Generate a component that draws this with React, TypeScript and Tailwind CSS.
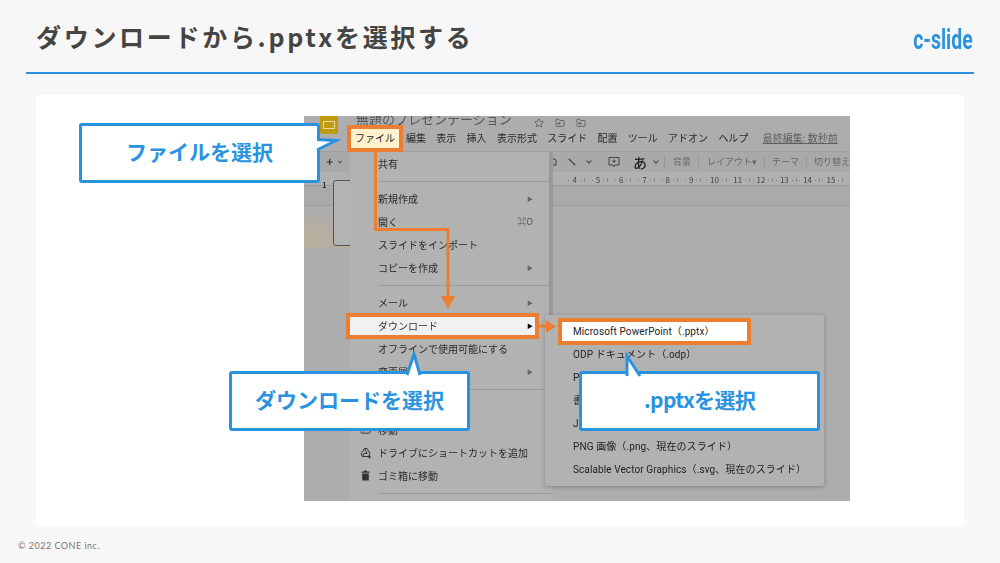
import { Plus, ChevronDown, Star, FolderInput, Minus } from 'lucide-react';

const jp = { fontFamily: '"Noto Sans CJK JP", sans-serif' };
const latinFirst = { fontFamily: 'Roboto, "Noto Sans CJK JP", sans-serif' };

const menuBar = ['編集', '表示', '挿入', '表示形式', 'スライド', '配置', 'ツール', 'アドオン', 'ヘルプ'];
const rulerNumbers = ['4', '5', '6', '7', '8', '9', '10', '11', '12', '13', '14', '15'];
const subItems = [
    'Microsoft PowerPoint（.pptx）',
    'ODP ドキュメント（.odp）',
    'PDF ドキュメント（.pdf）',
    '書式なしテキスト（.txt）',
    'JPEG 画像（.jpg、現在のスライド）',
    'PNG 画像（.png、現在のスライド）',
    'Scalable Vector Graphics（.svg、現在のスライド）',
];

function Divider() {
    return <div className="my-[5.5px] ml-[28px] h-px bg-[#9b9b9b]" />;
}

function MenuItem({ label, arrow, hint, icon, active }: { label: string; arrow?: boolean; hint?: string; icon?: React.ReactNode; active?: boolean }) {
    return (
        <div className={`flex h-[23px] items-center pl-[28px] text-[10px] ${active ? 'mr-[14px] bg-[#f1f1f3] pr-[6px] text-[#333]' : 'pr-[20px] text-[#2a2a2a]'}`}>
            {icon && <span className="-ml-[18px] flex w-[18px] items-center text-[#333]">{icon}</span>}
            <span className="flex-1 whitespace-nowrap">{label}</span>
            {arrow && <span className={`text-[6px] ${active ? 'text-black' : 'text-[#666]'}`}>▶</span>}
            {hint && <span className="text-[9px] text-[#555]">{hint}</span>}
        </div>
    );
}

function Callout({ className, label, children }: { className: string; label: string; children: React.ReactNode }) {
    return (
        <div className={`absolute z-30 flex h-[60px] w-[241px] items-center justify-center rounded-[3px] border-[3px] border-[#2a93e0] bg-white pb-[3px] text-[21px] font-bold text-[#2a93e0] ${className}`}>
            {label}
            {children}
        </div>
    );
}

export default function App() {
    return (
        <div className="flex h-[563px] w-[1000px] flex-col overflow-hidden bg-[#f7f7f7]" style={jp}>
            <header className="mx-[26px] flex h-[74px] shrink-0 items-start justify-between border-b-2 border-[#2a93e0] pr-px pl-[10px]">
                <h1 className="mt-[18px] text-[25px] leading-[36px] font-bold tracking-[2.7px] text-[#444]">ダウンロードから.pptxを選択する</h1>
                <div className="mt-[25px] origin-right scale-x-[0.72] font-['Roboto',sans-serif] text-[27px] leading-[30px] font-bold text-[#2a93e0]">c-slide</div>
            </header>

            <main className="mx-[36px] mt-[21px] h-[431px] shrink-0 bg-white pt-[21px] pl-[268px]">
                <div className="relative h-[385px] w-[546px] overflow-hidden bg-[#adadaf] blur-[0.3px]">
                    {/* app icon */}
                    <div className="absolute top-0 left-[16px] flex h-[18px] w-[18px] items-center justify-center rounded-b-[2px] bg-[#c19a0c]">
                        <div className="h-[8px] w-[12px] border border-[#e6d9a8]" />
                    </div>

                    {/* title row */}
                    <div className="flex h-[9px] items-end pl-[52px]">
                        <span className="-mb-[1px] text-[13px] leading-[14px] whitespace-nowrap text-[#555]">無題のプレゼンテーション</span>
                        <Star className="mb-[-3px] ml-[22px] h-[10px] w-[10px] text-[#555]" />
                        <FolderInput className="mb-[-3px] ml-[11px] h-[10px] w-[10px] text-[#555]" />
                        <FolderInput className="mb-[-3px] ml-[11px] h-[10px] w-[10px] text-[#555]" />
                    </div>

                    {/* menu row */}
                    <div className="flex h-[27px] items-center gap-[10.3px] border-b border-[#a0a0a2] pb-[2px] pl-[102px] text-[10px] whitespace-nowrap text-[#2a2a2a]">
                        {menuBar.map((m) => (
                            <span key={m}>{m}</span>
                        ))}
                        <span className="ml-[4px] text-[#5e5e5e] underline">最終編集: 数秒前</span>
                    </div>

                    {/* toolbar */}
                    <div className="flex h-[20px] items-center bg-[#a9a9ab] pl-[21px] text-[9px] whitespace-nowrap text-[#666]">
                        <Plus className="h-[12px] w-[12px] text-[#333]" strokeWidth={3} />
                        <ChevronDown className="ml-[3px] h-[8px] w-[8px] text-[#555]" strokeWidth={4} />
                        <svg className="ml-[205px] h-[12px] w-[12px] text-[#444]" viewBox="0 0 12 12" fill="none" stroke="currentColor" strokeWidth="1.3">
                            <path d="M2 2H7L9 4V10H5" />
                        </svg>
                        <div className="ml-[7px] flex items-center">
                            <Minus className="h-[14px] w-[14px] rotate-45 text-[#333]" />
                            <ChevronDown className="ml-[6px] h-[8px] w-[8px] text-[#555]" strokeWidth={4} />
                            <svg className="ml-[15px] h-[12px] w-[12px] text-[#444]" viewBox="0 0 12 12" fill="none" stroke="currentColor" strokeWidth="1">
                                <path d="M1 1.500H11V9H7L6 10.500L5 9H1ZM6 3.500V7M4.200 5.200H7.800" />
                            </svg>
                            <span className="ml-[13px] text-[14px] leading-none font-medium text-[#222]">あ</span>
                            <ChevronDown className="ml-[5px] h-[8px] w-[8px] text-[#555]" strokeWidth={4} />
                            <span className="ml-[4px] h-[14px] w-px bg-[#9a9a9c]" />
                            <span className="ml-[8px]">背景</span>
                            <span className="ml-[7px] h-[14px] w-px bg-[#9a9a9c]" />
                            <span className="ml-[8px]">レイアウト▾</span>
                            <span className="ml-[7px] h-[14px] w-px bg-[#9a9a9c]" />
                            <span className="ml-[7px]">テーマ</span>
                            <span className="ml-[7px] h-[14px] w-px bg-[#9a9a9c]" />
                            <span className="ml-[7px]">切り替え</span>
                        </div>
                    </div>

                    {/* ruler */}
                    <div className="relative h-[14px] border-b border-[#9c9c9e] bg-[#b0b0b2]">
                        <div className="absolute top-[3px] left-[261px] flex text-[8px] leading-[10px] text-[#444]">
                            {rulerNumbers.map((n) => (
                                <span key={n} className="flex w-[23.3px] items-center justify-center">
                                    <span className="mr-[3px] h-px w-px bg-[#777]" />
                                    {n}
                                    <span className="mx-[3px] h-px w-px bg-[#777]" />
                                    <span className="h-[4px] w-px bg-[#888]" />
                                </span>
                            ))}
                        </div>
                    </div>
                    <div className="h-[20px] border-b border-[#9c9c9e] bg-[#aaaaac]" />

                    {/* filmstrip */}
                    <div className="absolute top-[90px] left-0 h-[42px] w-[46px] bg-gradient-to-b from-[#adadaf] to-[#b6ae9e] to-70%" />
                    <div className="absolute top-[63px] left-[18px] text-[8px] font-medium text-[#222]">1</div>
                    <div className="absolute top-[64px] left-[29px] h-[66px] w-[30px] rounded-[3px] border border-[#555] bg-[#b3b3b3]" />

                    {/* file menu */}
                    <div className="absolute top-[36px] left-[46px] z-10 h-[349px] w-[203px] bg-[#b2b2b2]">
                        <MenuItem label="共有" />
                        <Divider />
                        <MenuItem label="新規作成" arrow />
                        <MenuItem label="開く" hint="⌘O" />
                        <MenuItem label="スライドをインポート" />
                        <MenuItem label="コピーを作成" arrow />
                        <Divider />
                        <MenuItem label="メール" arrow />
                        <MenuItem label="ダウンロード" arrow active />
                        <MenuItem label="オフラインで使用可能にする" />
                        <MenuItem label="変更履歴" arrow />
                        <Divider />
                        <MenuItem label="名前を変更" />
                        <MenuItem label="移動" icon={<FolderInput className="h-[11px] w-[11px]" />} />
                        <MenuItem
                            label="ドライブにショートカットを追加"
                            icon={
                                <svg className="h-[12px] w-[12px]" viewBox="0 0 12 12" fill="none" stroke="currentColor" strokeWidth="1">
                                    <path d="M4.500 1.500H7L10 6.500L8.500 9.500H2.500L1 7ZM4.500 1.500L7 6.500H4L2.500 9.500M9.500 8.500V11.500M8 10H11" />
                                </svg>
                            }
                        />
                        <MenuItem
                            label="ゴミ箱に移動"
                            icon={
                                <svg className="h-[11px] w-[11px]" viewBox="0 0 11 11" fill="currentColor">
                                    <path d="M1.500 1.500H4V.500H7V1.500H9.500V2.800H1.500ZM2.200 3.500H8.800V10.500H2.200Z" />
                                </svg>
                            }
                        />
                        <Divider />
                        <div className="absolute top-0 right-0 h-[165px] w-[4px] rounded-full bg-[#9a9a9c]" />
                    </div>

                    {/* download submenu */}
                    <div className="absolute top-[199px] left-[241px] z-20 h-[171px] w-[279px] rounded-[2px] bg-[#b2b2b2] pt-[5px] shadow-[0_1px_4px_rgba(0,0,0,0.25)]" style={latinFirst}>
                        {subItems.map((s) => (
                            <div key={s} className="flex h-[23px] items-center pl-[28px] text-[10px] tracking-[0.1px] whitespace-nowrap text-[#222]">{s}</div>
                        ))}
                    </div>
                </div>
            </main>

            <footer className="mt-[14px] pl-[18px] font-['Lato',sans-serif] text-[9px] leading-[12px] tracking-[0.5px] text-[#777]">© 2022 CONE inc.</footer>

            {/* annotations on the slide */}
            <div className="absolute top-[125px] left-[347px] z-30 flex h-[27px] w-[56px] items-center justify-center border-[4px] border-[#ed7d31] bg-[#fff2cc] pb-[2px] text-[10px] text-[#222]" style={jp}>ファイル</div>
            <div className="absolute top-[313px] left-[346px] z-30 h-[26px] w-[193px] border-[4px] border-[#ed7d31]" />
            <div className="absolute top-[318px] left-[558px] z-30 flex h-[27px] w-[193px] items-center border-[4px] border-[#ed7d31] bg-white pl-[11px] text-[10px] tracking-[0.1px] whitespace-nowrap text-[#222]" style={latinFirst}>Microsoft PowerPoint（.pptx）</div>

            <svg className="absolute top-0 left-0 z-30" width="1000" height="563" fill="none">
                <path d="M375.500 152V229.500H448V298" stroke="#ed7d31" strokeWidth="3" />
                <path d="M441 296H455L448 309Z" fill="#ed7d31" />
                <path d="M539 326H550" stroke="#ed7d31" strokeWidth="3" />
                <path d="M546 320L556 326.500L546 333Z" fill="#ed7d31" />
            </svg>

            <Callout className="top-[123px] left-[79px]" label="ファイルを選択">
                <svg className="absolute top-[8px] -right-[24px]" width="26" height="22" fill="none">
                    <path d="M2 5.500L21 6.500L2 16" fill="#fff" />
                    <path d="M2 5.500L21 6.500L2 16" stroke="#2a93e0" strokeWidth="3" />
                </svg>
            </Callout>
            <Callout className="top-[371px] left-[229px]" label="ダウンロードを選択">
                <svg className="absolute -top-[23px] left-[170px]" width="24" height="25" fill="none">
                    <path d="M5 24L12 3L18 24" fill="#fff" />
                    <path d="M5 24L12 3L18 24" stroke="#2a93e0" strokeWidth="3" />
                </svg>
            </Callout>
            <Callout className="top-[371px] left-[579px] tracking-[-0.7px]" label=".pptxを選択">
                <svg className="absolute -top-[22px] left-[40px]" width="24" height="25" fill="none">
                    <path d="M5 24L5 4L18 24" fill="#fff" />
                    <path d="M5 24L5 4L18 24" stroke="#2a93e0" strokeWidth="3" />
                </svg>
            </Callout>
        </div>
    );
}
